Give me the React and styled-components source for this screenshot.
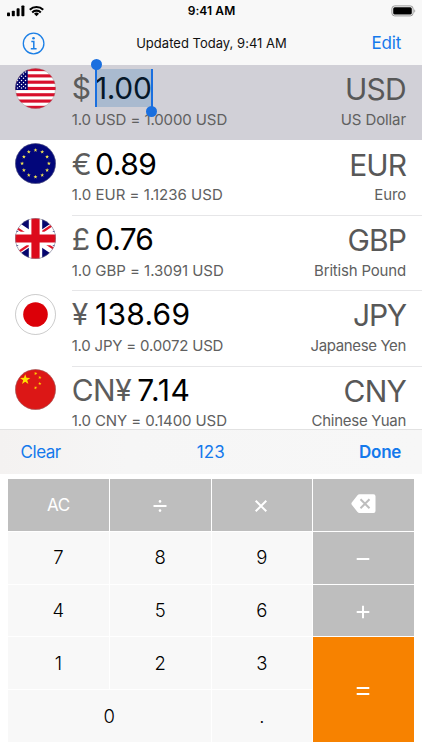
import * as React from 'react'
import styled, { createGlobalStyle } from 'styled-components'

const GlobalStyle = createGlobalStyle`
  * {
    box-sizing: border-box;
  }
  body {
    margin: 0;
    background: #fff;
    font-family: Inter, 'Liberation Sans', sans-serif;
    font-kerning: normal;
  }
`

const Screen = styled.div`
  width: 422px;
  height: 750px;
  display: flex;
  flex-direction: column;
  overflow: hidden;
  background: #fff;
`

const StatusBar = styled.div`
  height: 22px;
  flex: none;
  display: grid;
  grid-template-columns: 1fr auto 1fr;
  align-items: center;
  padding: 0 6px 0 7px;
  background: #f8f8f8;
`

const Signal = styled.div`
  display: flex;
  align-items: center;
  gap: 4px;
`

const Time = styled.div`
  font-size: 12px;
  font-weight: 600;
  line-height: 22px;
  letter-spacing: 0.1px;
  color: #000;
`

const Battery = styled.svg`
  justify-self: end;
  display: block;
`

const Header = styled.div`
  height: 43px;
  flex: none;
  display: grid;
  grid-template-columns: 1fr auto 1fr;
  align-items: center;
  padding: 0 21px 1px 22px;
  background: #f8f8f8;
`

const Updated = styled.div`
  font-size: 13px;
  line-height: 20px;
  letter-spacing: 0.02px;
  color: #111;
`

const TextButton = styled.button`
  justify-self: ${(props) => props.align || 'start'};
  padding: 0;
  border: 0;
  background: none;
  font-family: inherit;
  font-size: 17px;
  font-weight: ${(props) => (props.bold ? 600 : 400)};
  line-height: 22px;
  letter-spacing: ${(props) => props.track || 0}px;
  color: #1479ec;
`

const List = styled.div`
  height: 364px;
  flex: none;
  display: flex;
  flex-direction: column;
`

const Row = styled.div`
  height: 75.4px;
  flex: none;
  display: flex;
  padding: 2.7px 0 0 15.2px;
  background: ${(props) => (props.selected ? '#d1d0d7' : '#fff')};
  &:last-child {
    flex: 0 1 auto;
    min-height: 0;
  }
`

const Flag = styled.svg`
  width: 41px;
  height: 41px;
  flex: none;
  display: block;
`

const Body = styled.div`
  flex: 1;
  display: grid;
  grid-template-columns: auto auto;
  grid-template-rows: 36px 20px;
  row-gap: 3.6px;
  justify-content: space-between;
  margin-left: 15.5px;
  padding: 2.6px 16px 0 0;
  border-bottom: 1px solid ${(props) => (props.selected ? '#d1d0d7' : '#e6e6e8')};
  ${Row}:last-child & {
    border-bottom: 0;
  }
`

const Money = styled.div`
  display: flex;
  font-size: 30px;
  line-height: 36px;
  color: #000;
`

const Sign = styled.span`
  min-width: 23.2px;
  margin-right: ${(props) => props.gap || 0}px;
  letter-spacing: ${(props) => props.track || 0}px;
  color: #5c5c5c;
`

const Amount = styled.span`
  position: relative;
  letter-spacing: ${(props) => props.track}px;
`

const Selection = styled.span`
  position: absolute;
  left: 0;
  top: -1.5px;
  width: 58px;
  height: 38.5px;
  border: solid #1a6fdf;
  border-width: 0 2px;
  background: rgba(26, 111, 180, 0.22);
  &::before,
  &::after {
    content: '';
    position: absolute;
    width: 11px;
    height: 11px;
    border-radius: 50%;
    background: #1a6fdf;
  }
  &::before {
    left: -6px;
    top: -10px;
  }
  &::after {
    right: -6px;
    bottom: -10px;
  }
`

const Code = styled.div`
  justify-self: end;
  font-size: 30px;
  line-height: 38px;
  letter-spacing: ${(props) => props.track}px;
  color: #585858;
`

const Small = styled.div`
  justify-self: ${(props) => props.align || 'start'};
  font-size: 15px;
  line-height: 20px;
  letter-spacing: ${(props) => props.track}px;
  white-space: nowrap;
  color: #606060;
`

const Toolbar = styled.div`
  height: 45px;
  flex: none;
  display: grid;
  grid-template-columns: 1fr auto 1fr;
  align-items: center;
  padding: 0 21px 0 20.5px;
  border-top: 1px solid #e2e2e2;
  background: linear-gradient(to right, #f4f2f1, #f6f6f6 30%, #f7f7f7);
`

const Keypad = styled.div`
  flex: none;
  height: 263px;
  margin: 5px 8px 0;
  display: grid;
  grid-template-columns: repeat(4, 1fr);
  grid-template-rows: repeat(5, 1fr);
  gap: 1px;
`

const colors = {
  digit: ['#f8f8f8', '#000'],
  op: ['#bebebe', '#fff'],
  equals: ['#f78200', '#fff'],
}

const Key = styled.button`
  grid-column: span ${(props) => props.cols || 1};
  grid-row: span ${(props) => props.rows || 1};
  display: flex;
  align-items: center;
  justify-content: center;
  padding: 0 0 1px;
  border: 0;
  font-family: inherit;
  font-size: ${(props) => (props.kind === 'op' ? 17 : 18.5)}px;
  font-weight: 300;
  line-height: 24px;
  letter-spacing: ${(props) => (props.kind === 'op' ? -0.5 : 0)}px;
  background: ${(props) => colors[props.kind][0]};
  color: ${(props) => colors[props.kind][1]};
`

const AllClear = styled.span`
  margin-top: 2px;
  font-weight: 400;
`

const Glyph = styled.svg`
  display: block;
  margin: 4px 1px 0 0;
  fill: none;
  stroke: currentColor;
  stroke-width: 2;
`

const star = (cx, cy, r, rot = 0) =>
  Array.from({ length: 10 }, (_, i) => {
    const a = ((i * 36 - 90 + rot) * Math.PI) / 180
    const d = i % 2 ? r * 0.4 : r
    return `${cx + d * Math.cos(a)},${cy + d * Math.sin(a)}`
  }).join(' ')

const flags = {
  USD: (
    <>
      <rect width="41" height="41" fill="#fff" />
      {[0, 1, 2, 3, 4, 5, 6].map((i) => (
        <rect key={i} y={i * 6.3} width="41" height="3.15" fill="#d80f2c" />
      ))}
      <rect width="12.7" height="22" fill="#00006c" />
      {[2.5, 6.5, 10.5].map((x) =>
        [4, 8.2, 12.4, 16.6, 20].map((y) => (
          <circle key={`${x}-${y}`} cx={x} cy={y} r="0.75" fill="#fff" />
        ))
      )}
      {[4.5, 8.5].map((x) =>
        [6, 10.3, 14.5, 18.5].map((y) => (
          <circle key={`${x}-${y}`} cx={x} cy={y} r="0.7" fill="#fff" />
        ))
      )}
    </>
  ),
  EUR: (
    <>
      <rect width="41" height="41" fill="#02067a" />
      {Array.from({ length: 12 }, (_, i) => {
        const a = (i * Math.PI) / 6
        return (
          <polygon
            key={i}
            points={star(20.5 + 13.4 * Math.cos(a), 20.5 + 13.4 * Math.sin(a), 2.1)}
            fill="#f3e551"
          />
        )
      })}
    </>
  ),
  GBP: (
    <>
      <rect width="41" height="41" fill="#06066e" />
      <path d="M-10 0L51 41M51 0L-10 41" stroke="#fff" strokeWidth="8" />
      <path d="M-11.5 1L20.5 22.5M52.5 40L20.5 18.5M50 -1.5L20.5 18.5M-9 42.5L20.5 22.5" stroke="#e0142a" strokeWidth="2.2" />
      <path d="M20.5 0V41M0 20.5H41" stroke="#fff" strokeWidth="13.4" />
      <path d="M20.5 0V41M0 20.5H41" stroke="#dc0a1c" strokeWidth="8.2" />
    </>
  ),
  JPY: (
    <>
      <rect width="41" height="41" fill="#fff" />
      <circle cx="20.5" cy="20.5" r="12.3" fill="#dc0008" />
    </>
  ),
  CNY: (
    <>
      <rect width="41" height="41" fill="#dc1716" />
      <polygon points={star(10.2, 10.6, 5.4)} fill="#ffe000" />
      <polygon points={star(20.6, 4.5, 1.8, 20)} fill="#ffd000" />
      <polygon points={star(24.8, 8.5, 1.8, 10)} fill="#ffd000" />
      <polygon points={star(24.8, 14.6, 1.8)} fill="#ffd000" />
      <polygon points={star(20.6, 18.8, 1.8, 20)} fill="#ffd000" />
    </>
  ),
}

// tracks: letter-spacing of amount, code, rate and name
const currencies = [
  { code: 'USD', name: 'US Dollar', sign: '$', amount: '1.00', rate: '1.0 USD = 1.0000 USD', tracks: [-0.3, -0.7, -0.1, -0.1], selected: true },
  { code: 'EUR', name: 'Euro', sign: '€', amount: '0.89', rate: '1.0 EUR = 1.1236 USD', tracks: [-0.4, -1, 0.02, -0.15] },
  { code: 'GBP', name: 'British Pound', sign: '£', amount: '0.76', rate: '1.0 GBP = 1.3091 USD', tracks: [-0.8, -0.9, -0.03, -0.18] },
  { code: 'JPY', name: 'Japanese Yen', sign: '¥', amount: '138.69', rate: '1.0 JPY = 0.0072 USD', tracks: [0.3, -1.2, -0.2, -0.36] },
  { code: 'CNY', name: 'Chinese Yuan', sign: 'CN¥', amount: '7.14', rate: '1.0 CNY = 0.1400 USD', tracks: [0.6, -0.8, -0.1, -0.27] },
]

const Currency = ({ code, name, sign, amount, rate, tracks, selected }) => (
  <Row selected={selected}>
    <Flag viewBox="0 0 41 41">
      <clipPath id={`clip-${code}`}>
        <circle cx="20.5" cy="20.5" r="20.3" />
      </clipPath>
      <g clipPath={`url(#clip-${code})`}>{flags[code]}</g>
      <circle cx="20.5" cy="20.5" r="20" fill="none" stroke="#888" strokeOpacity="0.55" strokeWidth="0.8" />
    </Flag>
    <Body selected={selected}>
      <Money>
        <Sign gap={sign.length > 1 ? 6 : 0} track={sign.length > 1 ? -0.5 : 0}>{sign}</Sign>
        <Amount track={tracks[0]}>
          {amount}
          {selected && <Selection />}
        </Amount>
      </Money>
      <Code track={tracks[1]}>{code}</Code>
      <Small track={tracks[2]}>{rate}</Small>
      <Small track={tracks[3]} align="end">{name}</Small>
    </Body>
  </Row>
)

export default () => {
  return (
    <Screen>
      <GlobalStyle />
      <StatusBar>
        <Signal>
          <svg width="18" height="12" viewBox="0 0 18 12">
            <rect x="0" y="7.6" width="3" height="3.6" rx="0.8" />
            <rect x="4.8" y="5.8" width="3" height="5.4" rx="0.8" />
            <rect x="9.6" y="3.2" width="3" height="8" rx="0.8" />
            <rect x="14.4" y="0.4" width="3" height="10.8" rx="0.8" />
          </svg>
          <svg width="15" height="12" viewBox="0 0 15 12" fill="none" stroke="#000" strokeWidth="2.1">
            <path d="M0.8 4.7a9.5 9.5 0 0 1 13.4 0" />
            <path d="M3.2 7.4a6.1 6.1 0 0 1 8.6 0" />
            <path d="M7.5 11.3L5 8.8a3.6 3.6 0 0 1 5 0z" fill="#000" stroke="none" />
          </svg>
        </Signal>
        <Time>9:41 AM</Time>
        <Battery width="25" height="12" viewBox="0 0 25 12">
          <rect x="0.9" y="0.9" width="21.2" height="10" rx="2.8" fill="none" stroke="#999" strokeWidth="1" />
          <rect x="2.2" y="2.2" width="18.6" height="7.4" rx="1.5" />
          <path d="M23.3 4.2c1.3.5 1.3 3 0 3.5z" fill="#999" />
        </Battery>
      </StatusBar>
      <Header>
        <svg width="23" height="23" viewBox="0 0 23 23" fill="none" stroke="#1b7fe6" strokeWidth="1.3">
          <circle cx="11.6" cy="11.5" r="10.3" />
          <path d="M9.3 9.6h2.5v7M8.8 16.7h5.8" strokeWidth="1.5" />
          <circle cx="11.5" cy="6.3" r="1.3" fill="#1b7fe6" stroke="none" />
        </svg>
        <Updated>Updated Today, 9:41 AM</Updated>
        <TextButton align="end" track={-0.2}>Edit</TextButton>
      </Header>
      <List>
        {currencies.map((c) => (
          <Currency key={c.code} {...c} />
        ))}
      </List>
      <Toolbar>
        <TextButton track={-0.45}>Clear</TextButton>
        <TextButton>123</TextButton>
        <TextButton align="end" track={-0.3} bold>Done</TextButton>
      </Toolbar>
      <Keypad>
        <Key kind="op">
          <AllClear>AC</AllClear>
        </Key>
        <Key kind="op">
          <Glyph width="14" height="14" viewBox="0 0 14 14">
            <path d="M0.5 7h13" />
            <circle cx="7" cy="2.4" r="1.3" fill="#fff" stroke="none" />
            <circle cx="7" cy="11.6" r="1.3" fill="#fff" stroke="none" />
          </Glyph>
        </Key>
        <Key kind="op">
          <Glyph width="14" height="14" viewBox="0 0 14 14">
            <path d="M1.7 1.7l10.6 10.6M12.3 1.7L1.7 12.3" />
          </Glyph>
        </Key>
        <Key kind="op">
          <svg width="25" height="20" viewBox="0 0 25 20">
            <path d="M6.5 1.2Q7.3.3 8.5.3H22.5a2 2 0 0 1 2 2V17a2 2 0 0 1-2 2H8.5Q7.3 19 6.5 18L.8 10.8Q0 9.7.8 8.6z" fill="#fff" />
            <path d="M9.5 5.2l9 9M18.5 5.2l-9 9" stroke="#bebebe" strokeWidth="2" />
          </svg>
        </Key>
        <Key kind="digit">7</Key>
        <Key kind="digit">8</Key>
        <Key kind="digit">9</Key>
        <Key kind="op">
          <Glyph width="14" height="14" viewBox="0 0 14 14">
            <path d="M0.7 7h12.6" />
          </Glyph>
        </Key>
        <Key kind="digit">4</Key>
        <Key kind="digit">5</Key>
        <Key kind="digit">6</Key>
        <Key kind="op">
          <Glyph width="14" height="14" viewBox="0 0 14 14">
            <path d="M0.7 7h12.6M7 0.7v12.6" />
          </Glyph>
        </Key>
        <Key kind="digit">1</Key>
        <Key kind="digit">2</Key>
        <Key kind="digit">3</Key>
        <Key kind="equals" rows={2}>
          <Glyph width="14" height="14" viewBox="0 0 14 14">
            <path d="M0.7 4h12.6M0.7 10h12.6" />
          </Glyph>
        </Key>
        <Key kind="digit" cols={2}>0</Key>
        <Key kind="digit">.</Key>
      </Keypad>
    </Screen>
  )
}
